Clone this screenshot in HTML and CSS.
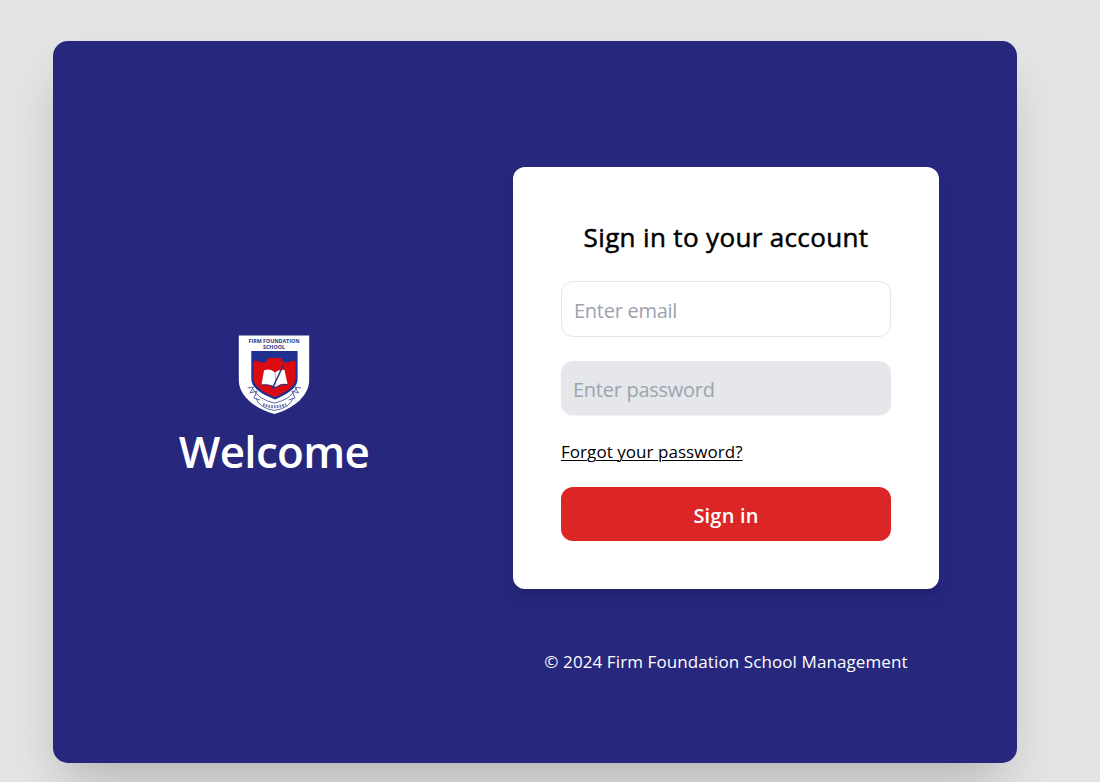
FILE: index.html
```html
<!DOCTYPE html>
<html lang="en">
<head>
<meta charset="utf-8">
<title>Sign in - Firm Foundation School</title>
<link rel="stylesheet" href="styles.css">
</head>
<body>
<main class="shell">
  <section class="brand">
    <svg class="crest" viewBox="0 0 72 82" role="img" aria-label="Firm Foundation School crest">
      <path d="M.8 2.500H71.200V47C71.200 62 57 75 36.500 81C15 75 .8 62 .8 47Z" fill="#fff"/>
      <text class="crest-text" x="36" y="9.800" textLength="51" lengthAdjust="spacingAndGlyphs">FIRM FOUNDATION</text>
      <text class="crest-text" x="36" y="16.200" textLength="22" lengthAdjust="spacingAndGlyphs">SCHOOL</text>
      <path d="M13.300 18H59.600V46C59.600 56 47 62 37 66.500C26 62 13.300 56 13.300 46Z" fill="#20308f"/>
      <path d="M15.500 28H21V29.500H27.500V28H29.500V25H43.500V28H46V29.500H52V28H57.500V45C57.500 54 46 60 37 64C27 60 15.500 54 15.500 45Z" fill="#dc0b12"/>
      <path d="M26 37.500Q32 35 37 39.500Q41 36 46.500 37L49.500 51Q43 49.500 38 54Q31 50.500 23.500 51.500Z" fill="#fff"/>
      <path d="M23.500 52Q31 51 38 54.500Q43 50.500 49.500 51.500" fill="none" stroke="#29317e" stroke-width="1"/>
      <path d="M37 39.500L38 53" fill="none" stroke="#8b91bd" stroke-width=".8"/>
      <path d="M45.500 32L34 56" fill="none" stroke="#29317e" stroke-width="1.500"/>
      <path d="M9.500 55L15.500 54L12 60L19 58L16 65L22 67M63 55L57 54L60.500 60L54 58L57 65L50.500 67M14 55Q21 67 36.500 70Q52 67 58.500 55M18 65Q21 75 36.500 77.500Q52 75 55 65" fill="none" stroke="#5c67a8" stroke-width="1"/>
      <path d="M25 71.500Q36.500 76 48 71.500" fill="none" stroke="#7680b5" stroke-width="3" stroke-dasharray="1.800 1"/>
    </svg>
    <h1 class="welcome">Welcome</h1>
  </section>
  <section class="access">
    <form class="card">
      <h2 class="title">Sign in to your account</h2>
      <input class="field email" type="email" placeholder="Enter email" aria-label="Email">
      <input class="field password" type="password" placeholder="Enter password" aria-label="Password">
      <a class="forgot" href="#">Forgot your password?</a>
      <button class="submit" type="button">Sign in</button>
    </form>
    <p class="copyright">© 2024 Firm Foundation School Management</p>
  </section>
</main>
</body>
</html>
```
FILE: styles.css
```css
* { box-sizing: border-box; }
body {
  margin: 0;
  height: 782px;
  overflow: hidden;
  padding: 41px 83px 19px 53px;
  background: #e4e4e4;
  font-family: "Open Sans", "Noto Sans", sans-serif;
}
.shell {
  display: grid;
  grid-template-columns: 442px 1fr;
  height: 722px;
  padding-right: 78px;
  border-radius: 15px;
  background: #27277d;
  box-shadow: -2px 27px 52px -13px rgba(0, 0, 0, .23);
}
.brand { display: flex; flex-direction: column; align-items: center; padding-top: 292px; }
.crest { width: 72px; height: 82px; flex: none; }
.crest-text { font: 700 4.500px "Open Sans", sans-serif; text-anchor: middle; fill: #29317e; }
.welcome { margin: 8px 0 0; color: #fff; font-size: 44px; line-height: 56px; font-weight: 600; letter-spacing: -.7px; white-space: nowrap; }
.access { display: flex; flex-direction: column; padding: 126px 0 0 18px; }
.card {
  display: flex;
  flex-direction: column;
  width: 426px;
  height: 422px;
  padding: 52px 48px 48px;
  border-radius: 12px;
  background: #fff;
  box-shadow: 0 11px 17px -3px rgba(0, 0, 0, .1), 0 5px 7px -4px rgba(0, 0, 0, .1);
}
.title { margin: 0 0 26px; font-size: 26px; line-height: 36px; font-weight: 500; letter-spacing: .35px; -webkit-text-stroke: .5px #000; text-align: center; white-space: nowrap; }
.field { width: 100%; margin: 0; border: 0; border-radius: 12px; font: 20px/28px "Open Sans", sans-serif; letter-spacing: -.27px; }
.field::placeholder { color: #9ca3af; opacity: 1; }
.email { height: 56px; padding: 2px 12px 0; border: 1px solid #e5e7eb; }
.password { height: 54px; margin-top: 24px; padding: 2px 12px 0; background: #e5e7eb; box-shadow: 0 1px 2px rgba(0, 0, 0, .06); }
.forgot { align-self: flex-start; margin-top: 24px; color: #000; font-size: 17px; line-height: 26px; letter-spacing: .05px; text-underline-offset: 2px; text-decoration-thickness: 1px; }
.submit { height: 54px; margin-top: 22px; padding: 3px 0 0; border: 0; border-radius: 12px; background: #dc2626; color: #fff; font: 600 20px/28px "Open Sans", sans-serif; letter-spacing: .2px; }
.copyright { margin: 60px 0 0; color: #fff; font-size: 17px; line-height: 26px; letter-spacing: .1px; text-align: center; white-space: nowrap; }
```
